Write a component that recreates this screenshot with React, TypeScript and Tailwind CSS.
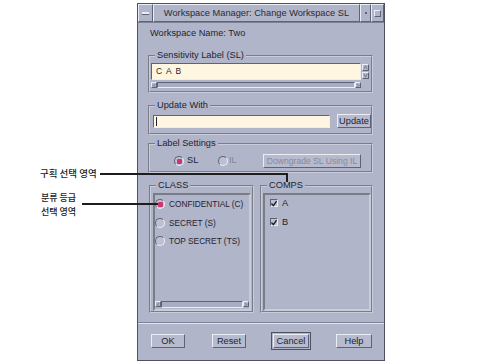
const bevelOut = "border border-t-[#eceef5] border-l-[#eceef5] border-b-[#5f6377] border-r-[#5f6377]";
const bevelIn = "border border-t-[#5f6377] border-l-[#5f6377] border-b-[#eceef5] border-r-[#eceef5]";
const groove = "border-2 [border-style:groove] border-[#c9ccda]";

function Radio({ on }: { on?: boolean }) {
  return (
    <span className={`w-[10px] h-[10px] rounded-full ${bevelIn} bg-[#bcc0d1] flex items-center justify-center shrink-0`}>
      {on && <span className="w-[5px] h-[5px] rounded-[1px] bg-[#d2336f]" />}
    </span>
  );
}

function Check() {
  return (
    <span className={`w-[8px] h-[8px] ${bevelIn} bg-[#bcc0d1] flex items-center justify-center shrink-0`}>
      <svg width="7" height="7" viewBox="0 0 7 7">
        <path d="M0.5 3.5 L2.8 6 L6.5 0.8" stroke="#1b1c25" strokeWidth="1.6" fill="none" />
      </svg>
    </span>
  );
}

function Arrow({ dir, size = 7 }: { dir: "up" | "down" | "left" | "right"; size?: number }) {
  const d = {
    up: "M1 5 L3 1 L5 5",
    down: "M1 1 L3 5 L5 1",
    left: "M5 1 L1 3 L5 5",
    right: "M1 1 L5 3 L1 5",
  }[dir];
  return (
    <span className={`${size === 6 ? "w-[6px] h-[6px]" : "w-[7px] h-[7px]"} ${bevelOut} flex items-center justify-center shrink-0`}>
      <svg width="5" height="5" viewBox="0 0 6 6">
        <path d={d} stroke="#6a6e82" strokeWidth="0.9" fill="none" />
      </svg>
    </span>
  );
}

function HScroll({ className = "" }: { className?: string }) {
  return (
    <div className={`flex ${className}`}>
      <Arrow dir="left" size={6} />
      <div className={`flex-1 ${bevelIn} bg-[#a9adc1]`} />
      <Arrow dir="right" size={6} />
    </div>
  );
}

function Group({ label, className = "", children }: { label: string; className?: string; children: React.ReactNode }) {
  return (
    <div className={`relative ${groove} ${className}`}>
      <span className="absolute -top-[8px] left-[5px] px-[2px] bg-[#b1b5c9] leading-[12px] text-[#23242e] whitespace-nowrap">{label}</span>
      {children}
    </div>
  );
}

function Button({ label, className = "", muted }: { label: string; className?: string; muted?: boolean }) {
  return (
    <div className={`h-[14px] ${bevelOut} bg-[#b7bbcd] flex items-center justify-center leading-[12px] whitespace-nowrap ${muted ? "text-[#868a9c]" : "text-[#23242e]"} ${className}`}>
      {label}
    </div>
  );
}

export default function App() {
  return (
    <div className="relative w-[494px] h-[364px] bg-white font-['Liberation_Sans',Arial,sans-serif] text-[9.25px] text-[#23242e] overflow-hidden">
      <div className="ml-[137px] pt-[3px]">
        <div className="w-[248px] h-[358px] bg-[#b1b5c9] border border-[#4f5262] flex flex-col">
          {/* title bar */}
          <div className="h-[19px] flex border-b border-[#7d8196]">
            <div className={`w-[15px] ${bevelOut} flex items-center justify-center`}>
              <span className="w-[7px] h-[3px] bg-[#eceef5] border-b border-[#5f6377]" />
            </div>
            <div className={`flex-1 ${bevelOut} text-center leading-[17px] text-[#2a2b36] whitespace-nowrap`}>
              Workspace Manager: Change Workspace SL
            </div>
            <div className={`w-[11px] ${bevelOut} flex items-center justify-center`}>
              <span className="w-[2px] h-[2px] bg-[#eceef5] border border-[#5f6377]" />
            </div>
            <div className={`w-[13px] ${bevelOut} flex items-center justify-center`}>
              <span className={`w-[7px] h-[7px] ${bevelOut}`} />
            </div>
          </div>

          <div className="flex flex-col pl-[10px] pr-[11px]">
            <div className="mt-[4px] h-[12px] leading-[12px] pl-[2px]">Workspace Name: Two</div>

            <Group label="Sensitivity Label (SL)" className="mt-[16px] pt-[6px] pb-[3px] px-[1px]">
              <div className="flex h-[17px]">
                <div className={`flex-1 ${bevelIn} bg-[#fff6e2] pl-[4px] leading-[15px] text-[8.5px] tracking-[1px]`}>C A B</div>
                <div className="w-[8px] ml-[1px] flex flex-col justify-between py-[1px]">
                  <Arrow dir="up" />
                  <Arrow dir="down" />
                </div>
              </div>
              <HScroll className="mt-[2px] mr-[9px] h-[6px]" />
            </Group>

            <Group label="Update With" className="mt-[12px] pt-[7px] pb-[5px] pl-[3px]">
              <div className="flex items-end h-[14px]">
                <div className={`flex-1 h-[13px] ${bevelIn} bg-[#fff6e2] pl-[2px] flex items-center`}>
                  <span className="w-[1px] h-[9px] bg-[#23242e]" />
                </div>
                <Button label="Update" className="w-[34px] ml-[7px]" />
              </div>
            </Group>

            <Group label="Label Settings" className="mt-[8px] pt-[9px] pb-[3px]">
              <div className="flex items-center h-[14px]">
                <div className="ml-[24px] w-[44px] flex items-center gap-[3px]">
                  <Radio on />
                  <span>SL</span>
                </div>
                <div className="w-[45px] flex items-center gap-[1px] text-[#80849a]">
                  <Radio />
                  <span>IL</span>
                </div>
                <Button label="Downgrade SL Using IL" muted className="w-[98px] text-[8.6px]" />
              </div>
            </Group>

            <div className="mt-[12px] flex gap-[6px]">
              <Group label="CLASS" className="w-[105px] h-[128px] pt-[6px] pl-[2px] pr-[1px] pb-[0px] ml-[1px]">
                <div className="h-full border-2 [border-style:inset] border-[#c9ccda] flex flex-col">
                  <div className="flex-1 flex flex-col">
                    {[
                      ["CONFIDENTIAL (C)", true],
                      ["SECRET (S)", false],
                      ["TOP SECRET (TS)", false],
                    ].map(([t, on]) => (
                      <div key={t as string} className="h-[18.5px] flex items-center gap-[4px]">
                        <Radio on={on as boolean} />
                        <span className="leading-[12px] text-[8.3px] whitespace-nowrap">{t as string}</span>
                      </div>
                    ))}
                  </div>
                  <HScroll className="mb-[1px] h-[7px]" />
                </div>
              </Group>
              <Group label="COMPS" className="w-[113px] h-[128px] pt-[6px] pl-[1px]">
                <div className="h-full border-2 [border-style:inset] border-[#c9ccda] pl-[5px] pt-[4px] flex flex-col gap-[11px]">
                  {["A", "B"].map((t) => (
                    <div key={t} className="h-[8px] flex items-center gap-[4px]">
                      <Check />
                      <span className="leading-[12px]">{t}</span>
                    </div>
                  ))}
                </div>
              </Group>
            </div>
          </div>

          <div className="mt-[9px] h-[2px] border-t border-[#7d8196] border-b border-b-[#e2e4ee]" />

          <div className="mt-[10px] flex justify-between pl-[13px] pr-[12px]">
            <Button label="OK" className="w-[34px]" />
            <Button label="Reset" className="w-[34px]" />
            <div className="border border-[#4f5262] -m-[2px] p-[1px]">
              <Button label="Cancel" className="w-[36px]" />
            </div>
            <Button label="Help" className="w-[36px]" />
          </div>
        </div>
      </div>

      {/* callouts */}
      <div className="absolute left-[40px] top-[167px] leading-[13px] text-[9.5px] font-medium text-[#222] font-['Noto_Sans_CJK_KR',sans-serif] whitespace-nowrap">
        구획 선택 영역
      </div>
      <div className="absolute left-[100px] top-[173px] w-[188px] h-[2px] bg-[#1d1d1d]" />
      <div className="absolute left-[286px] top-[173px] w-[2px] h-[9px] bg-[#1d1d1d]" />

      <div className="absolute left-[41px] top-[191px] flex flex-col items-center text-[9px] font-medium text-[#222] font-['Noto_Sans_CJK_KR',sans-serif] whitespace-nowrap">
        <span className="leading-[13.5px]">분류 등급</span>
        <span className="leading-[13.5px]">선택 영역</span>
      </div>
      <div className="absolute left-[82px] top-[203px] w-[76px] h-[2px] bg-[#1d1d1d]" />
    </div>
  );
}
